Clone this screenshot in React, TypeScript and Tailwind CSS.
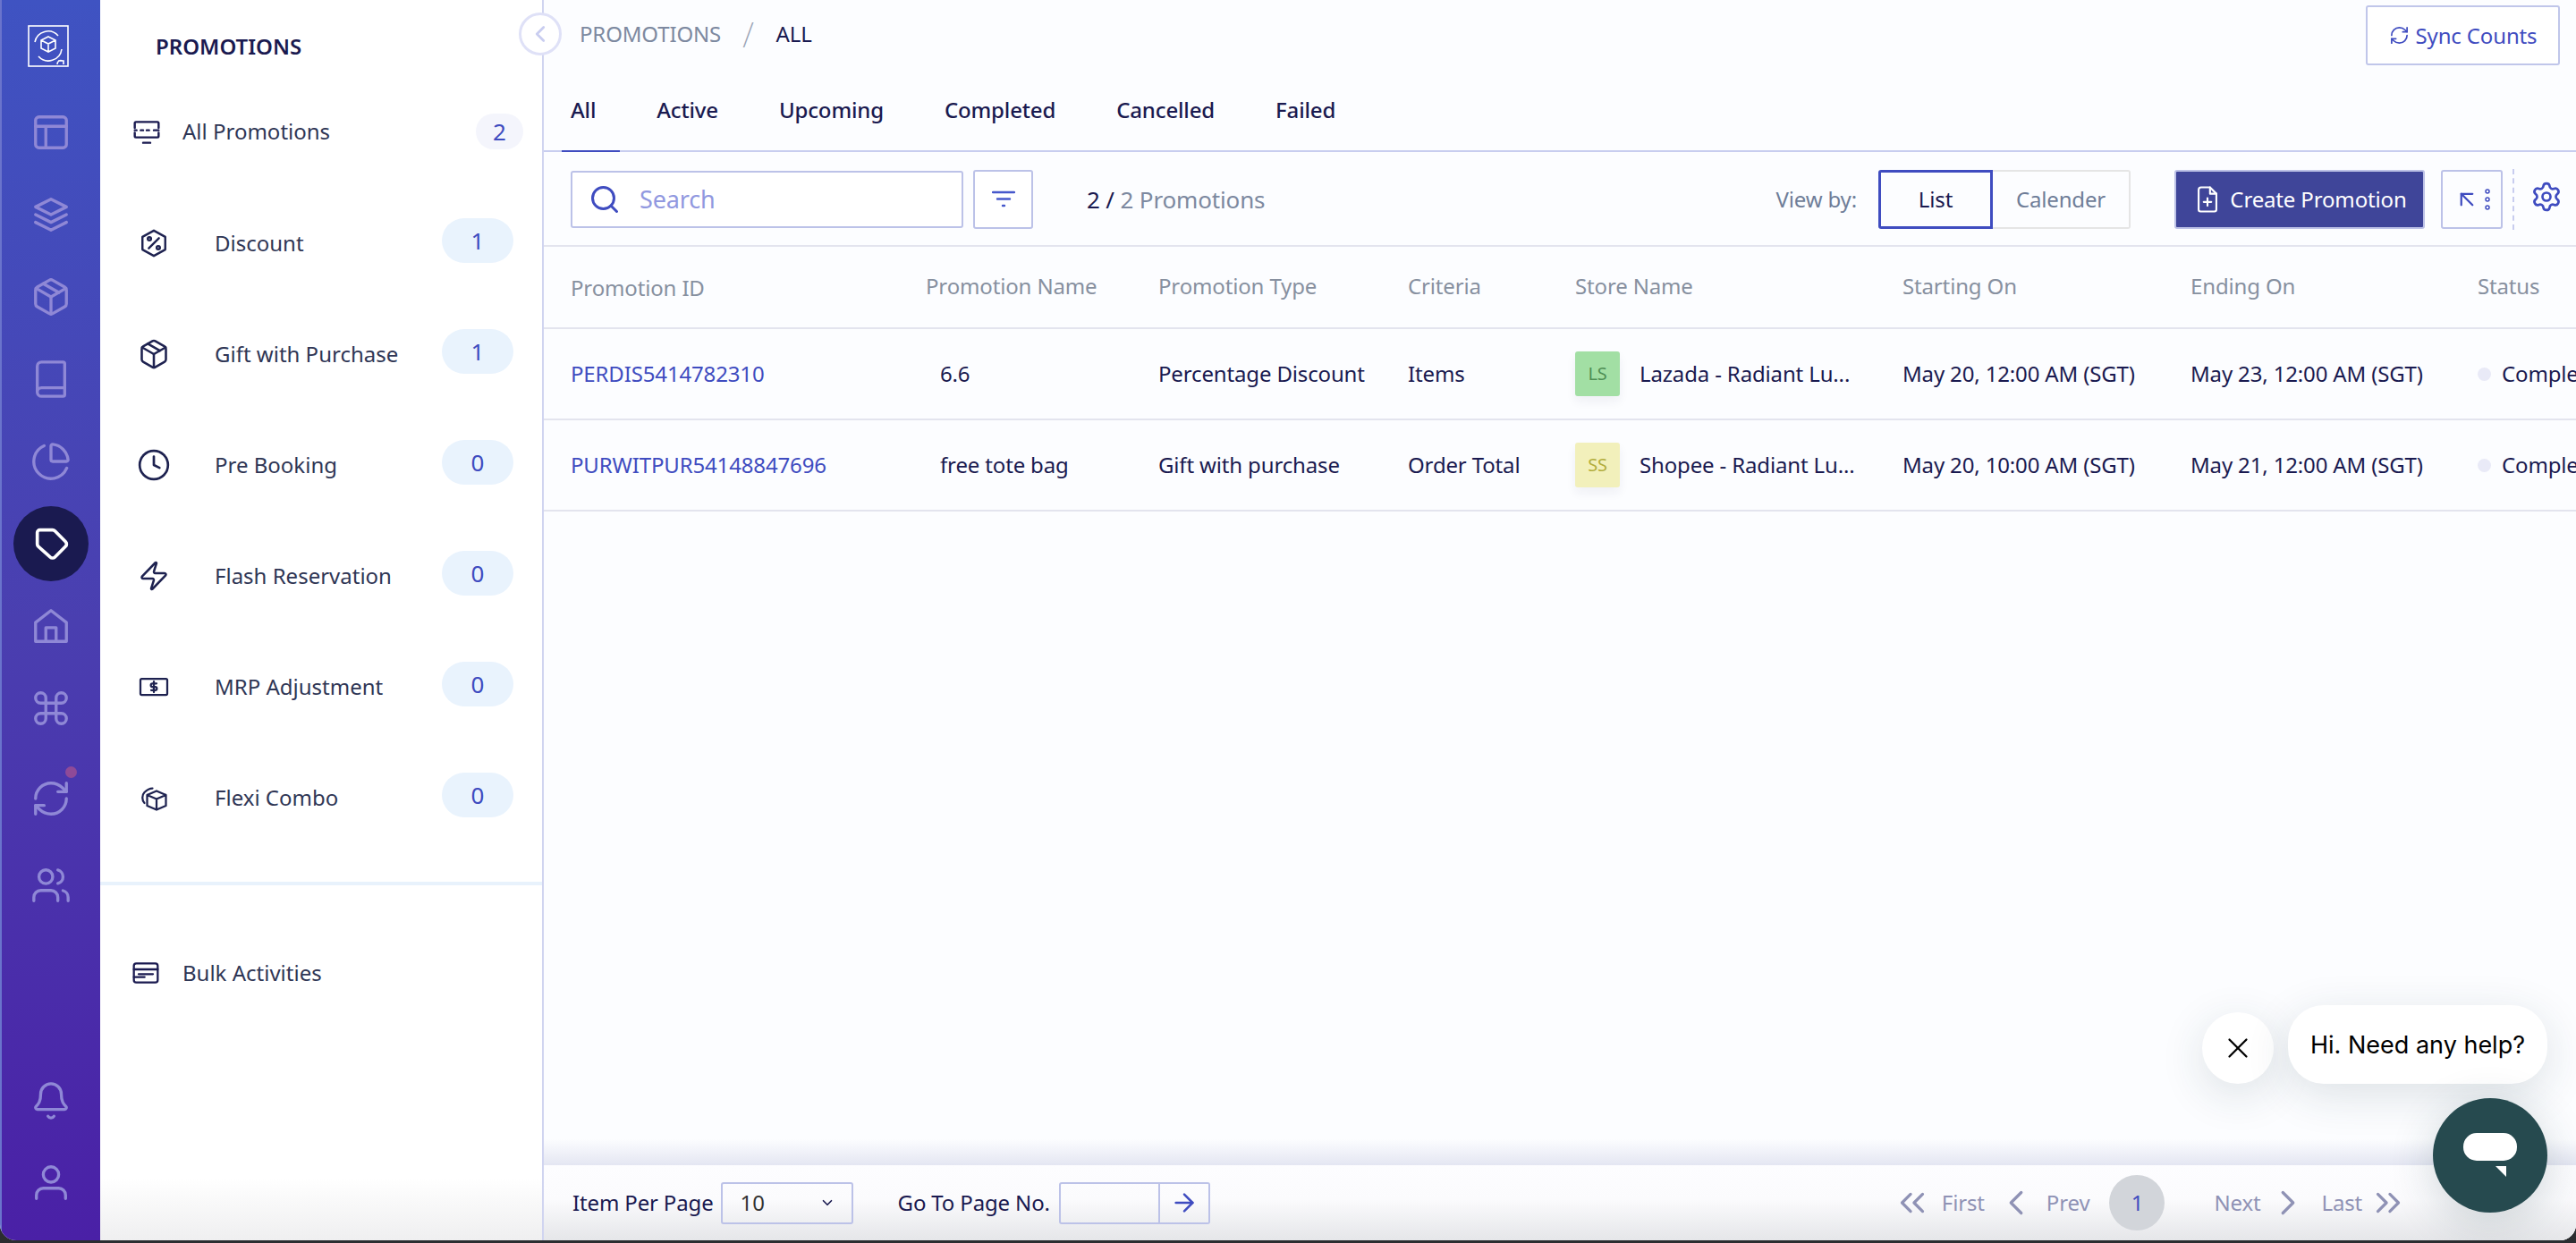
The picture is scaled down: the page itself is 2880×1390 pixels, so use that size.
import React from 'react';
import { Search, RefreshCw, Settings, ArrowRight, ChevronsLeft, ChevronsRight, ChevronLeft, ChevronRight, ChevronDown, ArrowUpLeft, X, Clock, Zap, Package, Command, Users, Bell, Book, PieChart } from 'lucide-react';

const S = (p: { size: number; sw?: number; className?: string; children: React.ReactNode }) => (
  <svg width={p.size} height={p.size} viewBox="0 0 24 24" fill="none" stroke="currentColor" strokeWidth={p.sw ?? 1.75} strokeLinecap="round" strokeLinejoin="round" className={p.className}>
    {p.children}
  </svg>
);

const railIcons: { key: string; el: React.ReactNode }[] = [
  { key: 'layout', el: <S size={46}><rect x="3" y="3" width="18" height="18" rx="2" /><path d="M3 8.5h18M9 21V8.5" /></S> },
  { key: 'layers', el: <S size={46}><path d="M12 3l9 4.5-9 4.5-9-4.5z" /><path d="M3 12l9 4.5 9-4.5" /><path d="M3 16.5l9 4.5 9-4.5" /></S> },
  { key: 'box', el: <Package size={46} strokeWidth={1.75} /> },
  { key: 'book', el: <Book size={46} strokeWidth={1.75} /> },
  { key: 'pie', el: <PieChart size={46} strokeWidth={1.75} /> },
];

function Rail() {
  return (
    <div className="w-[112px] shrink-0 h-full flex flex-col items-center border-l-2 border-[#6a74cc] bg-[linear-gradient(180deg,#3f53c2_0%,#4a3fb0_50%,#4a20a6_100%)] text-[#8f88d6]">
      <div className="h-[102px] w-full flex items-start justify-center pt-[28px] pr-[6px]">
        <svg width="46" height="47" viewBox="0 0 46 47" fill="none" stroke="#fff" strokeWidth="1.6">
          <rect x="1" y="1" width="44" height="45" />
          <path d="M8 19a15 15 0 0 1 26-7M38 27a15 15 0 0 1-26 8" />
          <path d="M23 13l8 4v9l-8 4-8-4v-9zM15 17l8 4 8-4M23 21v9" />
          <path d="M33 44c0-4 3-5 6-4M34 40h6v4" />
        </svg>
      </div>
      {railIcons.map((r) => (
        <div key={r.key} className="h-[92px] flex items-center justify-center">{r.el}</div>
      ))}
      <div className="h-[84px] w-[84px] my-[4px] flex items-center justify-center rounded-full bg-[#1a1a50] text-white">
        <S size={46} sw={1.9}><path d="M4 5.5a1.5 1.5 0 0 1 1.5-1.5h7.4a2 2 0 0 1 1.4.6l6.2 6.2a2 2 0 0 1 0 2.8l-6.2 6.2a2 2 0 0 1-2.8 0L4.6 13.6A2 2 0 0 1 4 12.2z" /></S>
      </div>
      <div className="h-[92px] flex items-center justify-center">
        <S size={46}><path d="M3 10l9-7 9 7v11H3z" /><path d="M9 21v-8h6v8" /></S>
      </div>
      <div className="h-[92px] flex items-center justify-center"><Command size={46} strokeWidth={1.75} /></div>
      <div className="h-[92px] mt-[9px] flex items-center justify-center relative">
        <RefreshCw size={46} strokeWidth={1.75} />
        <span className="absolute right-[-6px] top-[10px] w-[13px] h-[13px] rounded-full bg-[#8f4a98]" />
      </div>
      <div className="h-[92px] mt-[5px] flex items-center justify-center"><Users size={46} strokeWidth={1.75} /></div>
      <div className="mt-auto h-[92px] flex items-center justify-center"><Bell size={46} strokeWidth={1.75} /></div>
      <div className="h-[92px] mb-[18px] flex items-center justify-center">
        <S size={46}><circle cx="12" cy="7" r="4.5" /><path d="M3.5 21v-2a4 4 0 0 1 4-4h9a4 4 0 0 1 4 4v2" /></S>
      </div>
    </div>
  );
}

const items: { name: string; count: number; icon: React.ReactNode }[] = [
  { name: 'Discount', count: 1, icon: <S size={34} sw={1.7}><path d="M12 2l9 5v10l-9 5-9-5V7z" /><path d="M8 16l8-8" /><circle cx="8.5" cy="8.5" r="1.3" /><circle cx="15.5" cy="15.5" r="1.3" /></S> },
  { name: 'Gift with Purchase', count: 1, icon: <Package size={36} strokeWidth={1.7} /> },
  { name: 'Pre Booking', count: 0, icon: <Clock size={38} strokeWidth={1.7} /> },
  { name: 'Flash Reservation', count: 0, icon: <Zap size={36} strokeWidth={1.7} /> },
  { name: 'MRP Adjustment', count: 0, icon: <S size={36} sw={1.5}><rect x="2" y="6" width="20" height="12" rx="1" /><path d="M14 9.5h-3a1.2 1.2 0 0 0 0 2.5h2a1.2 1.2 0 0 1 0 2.5h-3M12 8v8" /></S> },
  { name: 'Flexi Combo', count: 0, icon: <S size={36} sw={1.5}><path d="M14 7l7 3v8l-7 3-7-3v-8zM7 10l7 3 7-3M14 13v8" /><path d="M5 16c-2-2-2-6 0-8 1-1 3-3 6-3" /></S> },
];

function Panel() {
  return (
    <div className="w-[496px] shrink-0 h-full border-r-2 border-[#d0d4f0] bg-[linear-gradient(180deg,#ffffff_0%,#ffffff_95%,#efeff0_100%)] flex flex-col text-[24px] text-[#2f3655]">
      <div className="h-[104px] flex items-center pl-[62px] text-[#1a1a50] font-semibold">PROMOTIONS</div>
      <div className="h-[86px] flex items-center pl-[36px] pr-[21px]">
        <span className="w-[32px] flex justify-center text-[#1a1a50]">
          <S size={36} sw={1.8}><path d="M2 9V5a1 1 0 0 1 1-1h18a1 1 0 0 1 1 1v4M2 13v3a1 1 0 0 0 1 1h18a1 1 0 0 0 1-1v-3M9 21.5h6" /><path d="M2 11h1.5M7 11h2M12 11h2M18 11h4" /></S>
        </span>
        <span className="ml-[24px]">All Promotions</span>
        <span className="ml-auto w-[53px] h-[40px] rounded-full bg-[#f4f5fc] flex items-center justify-center text-[26px] text-[#3f4cc0]">2</span>
      </div>
      <div className="pt-[20px]">
        {items.map((it) => (
          <div key={it.name} className="h-[124px] flex items-center pl-[36px] pr-[32px]">
            <span className="w-[48px] flex justify-center text-[#1e2250]">{it.icon}</span>
            <span className="ml-[44px]">{it.name}</span>
            <span className="ml-auto w-[80px] h-[50px] mb-[6px] rounded-full bg-[#e9f3fd] flex items-center justify-center text-[26px] text-[#3f4cc0]">{it.count}</span>
          </div>
        ))}
      </div>
      <div className="mt-[32px] h-[4px] bg-[#e8f2fc]" />
      <div className="mt-[78px] h-[40px] flex items-center pl-[35px]">
        <span className="w-[32px] flex justify-center text-[#1a1a50]">
          <S size={36} sw={1.7}><rect x="2" y="4" width="20" height="16" rx="2" /><path d="M2 9h20M6 13h12M2 15.5h9" /></S>
        </span>
        <span className="ml-[25px]">Bulk Activities</span>
      </div>
    </div>
  );
}

const cols = ['w-[397px]', 'w-[260px]', 'w-[279px]', 'w-[187px]', 'w-[366px]', 'w-[322px]', 'w-[321px]', 'w-[110px]'];
const heads = ['Promotion ID', 'Promotion Name', 'Promotion Type', 'Criteria', 'Store Name', 'Starting On', 'Ending On', 'Status'];

function Row(p: { id: string; name: string; type: string; crit: string; initials: string; badge: string; badgeText: string; store: string; start: string; end: string }) {
  return (
    <div className="h-[102px] shrink-0 flex items-center pl-[30px] border-b-2 border-[#e3e4ee] text-[24px] text-[#1a1a50] whitespace-nowrap">
      <div className={`${cols[0]} shrink-0 text-[#3f4cc0]`}>{p.id}</div>
      <div className={`${cols[1]} shrink-0 pl-[16px]`}>{p.name}</div>
      <div className={`${cols[2]} shrink-0`}>{p.type}</div>
      <div className={`${cols[3]} shrink-0`}>{p.crit}</div>
      <div className={`${cols[4]} shrink-0 flex items-center gap-[22px]`}>
        <span className={`w-[50px] h-[50px] rounded-[3px] flex items-center justify-center text-[20px] shadow-[0_6px_12px_rgba(30,30,80,0.06)] ${p.badge} ${p.badgeText}`}>{p.initials}</span>
        <span>{p.store}</span>
      </div>
      <div className={`${cols[5]} shrink-0`}>{p.start}</div>
      <div className={`${cols[6]} shrink-0`}>{p.end}</div>
      <div className={`${cols[7]} shrink-0 flex items-center gap-[12px]`}>
        <span className="w-[15px] h-[15px] rounded-full bg-[#e9eaf7] shrink-0" />
        <span>Comple</span>
      </div>
    </div>
  );
}

function Main() {
  return (
    <div className="flex-1 min-w-0 h-full flex flex-col bg-[#fcfdff] overflow-hidden whitespace-nowrap relative tracking-[-0.15px]">
      <div className="h-[76px] shrink-0 flex items-start pl-[40px] pr-[18px] text-[24px]">
        <div className="h-[76px] flex items-center">
          <span className="text-[#7d89a0]">PROMOTIONS</span>
          <span className="ml-[24px] mr-[25px] text-[#9aa3b5] text-[38px] font-extralight leading-none">/</span>
          <span className="text-[#1a1a50]">ALL</span>
        </div>
        <button className="ml-auto mt-[6px] w-[217px] h-[67px] border-2 border-[#c0c6ea] rounded-[3px] flex items-center justify-center gap-[7px] text-[#3f4cc0] bg-white">
          <RefreshCw size={23} strokeWidth={1.8} />
          Sync Counts
        </button>
      </div>
      <div className="h-[94px] shrink-0 relative flex items-center gap-[68px] pl-[30px] pt-[2px] border-b-2 border-[#c8cdef] text-[24px] font-medium text-[#1a1a50]">
        <span>All</span>
        <span>Active</span>
        <span>Upcoming</span>
        <span>Completed</span>
        <span>Cancelled</span>
        <span>Failed</span>
        <span className="absolute left-[20px] bottom-[-2px] w-[65px] h-[2px] bg-[#3f4cc0]" />
      </div>
      <div className="h-[106px] shrink-0 flex items-center pl-[30px] pr-[15px] pt-[2px] border-b-2 border-[#e3e4ee] text-[24px]">
        <div className="w-[439px] h-[64px] border-2 border-[#bcc2e8] rounded-[3px] bg-white flex items-center pl-[18px] gap-[21px] text-[27px] text-[#9198e0]">
          <Search size={36} strokeWidth={2} className="text-[#3f4cc0]" />
          Search
        </div>
        <div className="ml-[11px] w-[67px] h-[66px] border-2 border-[#bcc2e8] rounded-[3px] bg-white flex items-center justify-center">
          <svg width="26" height="22" viewBox="0 0 26 22" fill="none" stroke="#4658cc" strokeWidth="2.4" strokeLinecap="round"><path d="M1 3h24M6 10.5h14M12 18h2" /></svg>
        </div>
        <div className="ml-[60px] text-[26px]"><span className="text-[#1a1a50]">2 / </span><span className="text-[#7d89a0]">2 Promotions</span></div>
        <span className="ml-auto text-[#6f7d98]">View by:</span>
        <div className="ml-[24px] w-[128px] h-[66px] border-[3px] border-[#3f4cc0] rounded-l-[3px] flex items-center justify-center text-[#1a1a50]">List</div>
        <div className="w-[154px] h-[66px] border-2 border-l-0 border-[#e5e5e5] rounded-r-[3px] flex items-center justify-center text-[#6f7d98]">Calender</div>
        <div className="ml-[49px] w-[280px] h-[66px] border-2 border-[#bcc1e6] rounded-[3px] bg-[#3f4599] flex items-center justify-center gap-[8px] text-white">
          <S size={34} sw={1.5}><path d="M7 2.5h7l5 5V20a1.5 1.5 0 0 1-1.5 1.5h-11A1.5 1.5 0 0 1 5 20V4.5a2 2 0 0 1 2-2z" /><path d="M14 2.5V7.5h5M12 11v6M9 14h6" /></S>
          Create Promotion
        </div>
        <div className="ml-[18px] w-[69px] h-[66px] border-2 border-[#bcc2e8] rounded-[3px] flex items-center justify-center gap-[5px] text-[#3f4cc0]">
          <ArrowUpLeft size={30} strokeWidth={1.8} />
          <svg width="6" height="26" viewBox="0 0 6 26" fill="none" stroke="#3f4cc0" strokeWidth="1.5"><circle cx="3" cy="4" r="2" /><circle cx="3" cy="13" r="2" /><circle cx="3" cy="22" r="2" /></svg>
        </div>
        <div className="ml-[11px] h-[68px] border-l-2 border-dashed border-[#c8cdef]" />
        <Settings size={36} strokeWidth={1.8} className="ml-[18px] text-[#3f4cc0] mb-[6px]" />
      </div>
      <div className="h-[92px] shrink-0 flex items-center pl-[30px] pb-[2px] border-b-2 border-[#e3e4ee] text-[24px] text-[#87909f]">
        {heads.map((h, i) => (<div key={h} className={`${cols[i]} shrink-0 ${i === 0 ? 'pt-[4px]' : ''}`}>{h}</div>))}
      </div>
      <Row id="PERDIS5414782310" name="6.6" type="Percentage Discount" crit="Items" initials="LS" badge="bg-[#a2dfa4]" badgeText="text-[#4f8f55]" store="Lazada - Radiant Lu..." start="May 20, 12:00 AM (SGT)" end="May 23, 12:00 AM (SGT)" />
      <Row id="PURWITPUR54148847696" name="free tote bag" type="Gift with purchase" crit="Order Total" initials="SS" badge="bg-[#f2f0bb]" badgeText="text-[#b2ad3c]" store="Shopee - Radiant Lu..." start="May 20, 10:00 AM (SGT)" end="May 21, 12:00 AM (SGT)" />
      <div className="flex-1 bg-[linear-gradient(180deg,#fcfdff_0%,#fcfdff_96%,#e4e6f2_100%)]" />
      <div className="h-[84px] shrink-0 flex items-center pl-[32px] text-[24px] text-[#1a1a50] bg-[linear-gradient(180deg,#fdfdff_0%,#fbfbfd_45%,#e5e6e9_100%)]">
        <span>Item Per Page</span>
        <div className="ml-[8px] w-[148px] h-[47px] border-2 border-[#bcc2e8] rounded-[3px] flex items-center pl-[20px] pr-[18px] text-[#333]">
          10<ChevronDown size={18} strokeWidth={2.2} className="ml-auto text-[#1a1a50]" />
        </div>
        <span className="ml-[50px]">Go To Page No.</span>
        <div className="ml-[10px] w-[113px] h-[47px] border-2 border-[#bcc2e8] rounded-l-[3px]" />
        <div className="w-[56px] h-[47px] border-2 border-l-0 border-[#bcc2e8] rounded-r-[3px] flex items-center justify-center text-[#3f4cc0]"><ArrowRight size={32} strokeWidth={1.9} /></div>
        <div className="ml-[762px] flex items-center text-[#8f92b5]">
          <ChevronsLeft size={46} strokeWidth={1.7} />
          <span className="ml-[10px]">First</span>
          <ChevronLeft size={46} strokeWidth={1.7} className="ml-[12px]" />
          <span className="ml-[11px]">Prev</span>
          <span className="ml-[22px] w-[62px] h-[62px] rounded-full bg-[#d2d5da] flex items-center justify-center text-[#3f4cc0]">1</span>
          <span className="ml-[55px]">Next</span>
          <ChevronRight size={46} strokeWidth={1.7} className="ml-[7px]" />
          <span className="ml-[15px]">Last</span>
          <ChevronsRight size={46} strokeWidth={1.7} className="ml-[6px]" />
        </div>
      </div>
    </div>
  );
}

export default function App() {
  return (
    <div className="w-[2880px] h-[1390px] bg-[#2b2d30] overflow-hidden font-['Noto_Sans',sans-serif] relative">
      <div className="h-[1387px] flex rounded-b-[18px] overflow-hidden bg-white relative">
        <Rail />
        <Panel />
        <Main />
        <div className="absolute left-[580px] top-[14px] w-[48px] h-[48px] rounded-full border-[3px] border-[#dfe1f7] bg-white flex items-center justify-center text-[#c9cdf0]">
          <ChevronLeft size={30} strokeWidth={2.2} />
        </div>
        <div className="absolute left-[2462px] top-[1132px] w-[80px] h-[80px] rounded-full bg-white shadow-[0_12px_50px_rgba(30,60,70,0.14)] flex items-center justify-center text-black">
          <X size={38} strokeWidth={1.4} />
        </div>
        <div className="absolute left-[2558px] top-[1124px] w-[290px] h-[88px] rounded-[40px] bg-white shadow-[0_12px_50px_rgba(30,60,70,0.14)] flex items-center justify-center pt-[2px] text-[27px] text-black font-['Inter',sans-serif]">
          Hi. Need any help?
        </div>
        <div className="absolute left-[2720px] top-[1228px] w-[128px] h-[128px] rounded-full bg-[#264a4f] shadow-[0_10px_50px_rgba(30,60,70,0.2)] flex items-center justify-center">
          <svg width="60" height="50" viewBox="0 0 60 50" fill="#fff"><rect x="0" y="0" width="60" height="31" rx="15" /><path d="M36 37h12v12z" /></svg>
        </div>
      </div>
    </div>
  );
}
